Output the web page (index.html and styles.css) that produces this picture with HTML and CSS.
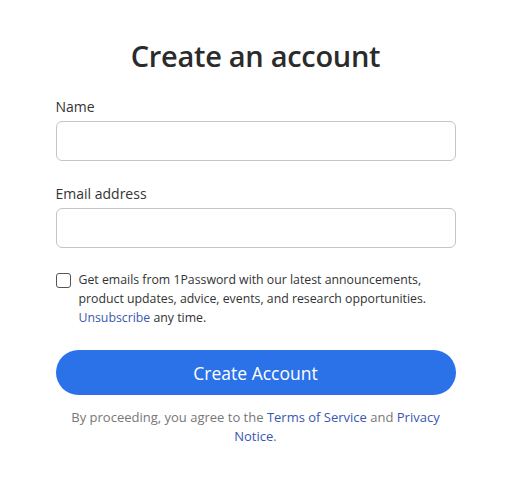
FILE: index.html
```html
<!DOCTYPE html>
<html lang="en">
<head>
<meta charset="UTF-8">
<meta name="viewport" content="width=device-width, initial-scale=1.0">
<title>Create an account</title>
<link rel="stylesheet" href="styles.css">
</head>
<body>

<div class="signup">
    <h1 class="title">Create an account</h1>

    <div class="field">
        <label class="label" for="name">Name</label>
        <input type="text" id="name" class="input">
    </div>

    <div class="field">
        <label class="label" for="email">Email address</label>
        <input type="email" id="email" class="input">
    </div>

    <label class="optin">
        <span class="box"></span>
        <span class="optin-text">Get emails from 1Password with our latest announcements, product updates, advice, events, and research opportunities. <a href="#" class="link">Unsubscribe</a> any time.</span>
    </label>

    <button class="submit">Create Account</button>

    <p class="legal">By proceeding, you agree to the <a href="#" class="link">Terms of Service</a> and <a href="#" class="link">Privacy</a><br><a href="#" class="link">Notice</a>.</p>
</div>

</body>
</html>
```

FILE: styles.css
```css
body {
    margin: 0;
    background-color: #fff;
    font-family: 'Open Sans', 'Noto Sans', Arial, sans-serif;
    color: #333;
}

.signup {
    width: 400px;
    margin: 0 auto;
    padding-top: 36px;
    padding-left: 1px;
}

.title {
    margin: 0 0 22px;
    text-align: center;
    font-size: 29px;
    font-weight: 600;
    color: #2b2b2b;
    letter-spacing: -0.3px;
}

.field {
    margin-bottom: 23px;
}

.label {
    display: block;
    font-size: 14px;
    line-height: 20px;
    margin-bottom: 4px;
    color: #333;
}

.input {
    display: block;
    box-sizing: border-box;
    width: 100%;
    height: 40px;
    border: 1px solid #c4c4c4;
    border-radius: 6px;
    background: #fff;
}

.optin {
    display: flex;
    gap: 8px;
    margin-top: -1px;
}

.box {
    flex: none;
    box-sizing: border-box;
    width: 15px;
    height: 15px;
    margin-top: 3px;
    border: 1px solid #555;
    border-radius: 3px;
}

.optin-text {
    font-size: 12.3px;
    line-height: 19px;
    color: #333;
}

.link {
    color: #3a57b0;
    text-decoration: none;
}

.submit {
    display: block;
    width: 100%;
    height: 45px;
    margin-top: 23px;
    border: none;
    border-radius: 23px;
    background-color: #2b72e9;
    color: #fff;
    font-family: inherit;
    font-size: 17.5px;
    cursor: pointer;
}

.legal {
    margin: 13px 0 0;
    padding: 0 13px;
    text-align: center;
    font-size: 13px;
    line-height: 19px;
    color: #777;
}
```
